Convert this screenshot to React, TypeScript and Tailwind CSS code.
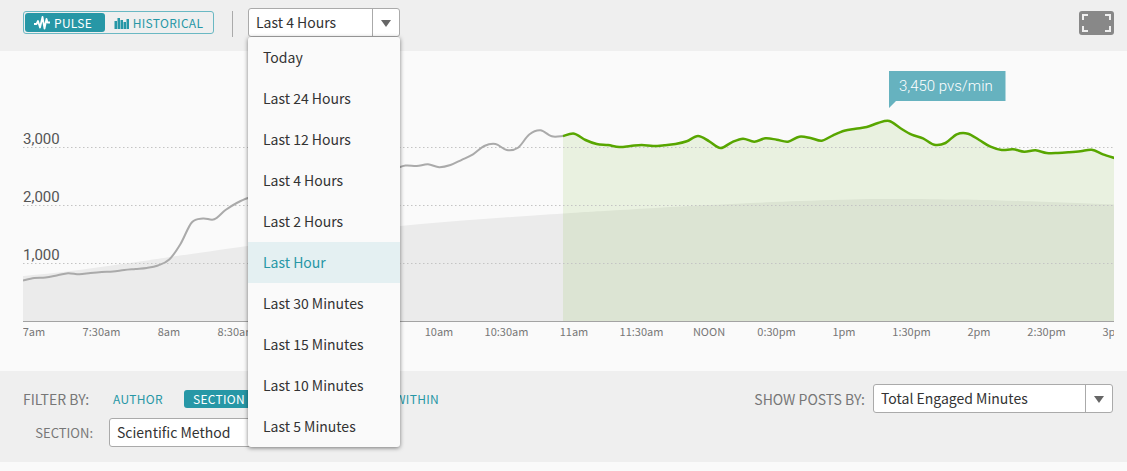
import { useState } from "react";
import type { ReactNode } from "react";

const RANGES = [
  "Today",
  "Last 24 Hours",
  "Last 12 Hours",
  "Last 4 Hours",
  "Last 2 Hours",
  "Last Hour",
  "Last 30 Minutes",
  "Last 15 Minutes",
  "Last 10 Minutes",
  "Last 5 Minutes",
];

const TIMES = [
  "7am", "7:30am", "8am", "8:30am", "9am", "9:30am", "10am", "10:30am", "11am",
  "11:30am", "NOON", "0:30pm", "1pm", "1:30pm", "2pm", "2:30pm", "3pm",
];

// one sample every five minutes, as height above the baseline (58 = 1,000 pvs)
const TRAFFIC = [
  41, 43.5, 44, 46, 48.3, 47.2, 48.5, 49.5, 50, 51.5, 52.5, 53.5, 56, 62, 77.5,
  99, 103, 102.2, 111.5, 118.5, 123.5, 125, 128, 131, 133, 135, 138, 141, 143,
  145, 147, 149, 150, 152.5, 156, 155.5, 157.2, 154.3, 156.5, 161.7, 167.2,
  175.5, 177.5, 171.5, 173.8, 187, 191.2, 185.2, 185.5, 187.8, 181.5, 177.5,
  176.5, 174.5, 175.5, 176.5, 175.5, 176.2, 177.5, 180.2, 185.5, 180.2, 173.5,
  179.2, 182.8, 179.8, 183.2, 181.8, 179.8, 184.8, 183.5, 180.8, 186.2, 190.8,
  192.8, 194.5, 198.5, 200.5, 193.2, 186.8, 183.2, 176.8, 178.5, 187.2, 187.8,
  181.5, 174.8, 171.5, 172.2, 169.8, 171.2, 168.5, 168.5, 169.2, 170.2, 171.8,
  167.2, 163.5,
];

// typical traffic for this day: [x, height above the baseline]
const TYPICAL = [
  [0, 45], [44, 49.5], [110, 58.5], [147, 64], [224, 75], [300, 86], [377, 95],
  [460, 102], [540, 107.5], [597, 111], [686, 116], [777, 120], [857, 122],
  [937, 121.5], [997, 120], [1091, 116.5],
];

const BASE = 270;
const STEP = 11.25;
const LIVE_FROM = 48;

type Point = [number, number];

function smooth(points: Point[]) {
  let d = `M${points[0][0]},${points[0][1]}`;
  for (let i = 0; i < points.length - 1; i++) {
    const p0 = points[i - 1] ?? points[i];
    const p1 = points[i];
    const p2 = points[i + 1];
    const p3 = points[i + 2] ?? p2;
    const c1 = [p1[0] + (p2[0] - p0[0]) / 6, p1[1] + (p2[1] - p0[1]) / 6];
    const c2 = [p2[0] - (p3[0] - p1[0]) / 6, p2[1] - (p3[1] - p1[1]) / 6];
    d += `C${c1[0]},${c1[1]} ${c2[0]},${c2[1]} ${p2[0]},${p2[1]}`;
  }
  return d;
}

const line = TRAFFIC.map((h, i): Point => [i * STEP, BASE + 0.5 - h]);
const past = smooth(line.slice(0, LIVE_FROM + 1));
const live = smooth(line.slice(LIVE_FROM));
const typical = smooth(TYPICAL.map(([x, h]): Point => [x, BASE - h]));

function TrafficChart() {
  const liveX = LIVE_FROM * STEP;

  return (
    <svg viewBox="0 0 1091 320" className="block w-full" role="img" aria-label="Page views per minute">
      <path d={`${typical}V${BASE}H0Z`} fill="#000" fillOpacity="0.06" />
      <path d={`${live}V${BASE}H${liveX}Z`} fill="#58a600" fillOpacity="0.1" />

      {[1, 2, 3].map((n) => (
        <g key={n}>
          <line
            x1="0"
            x2="1091"
            y1={BASE + 0.5 - n * 58}
            y2={BASE + 0.5 - n * 58}
            stroke="#c4c4c4"
            strokeDasharray="1.5 2.5"
          />
          <text x="0" y={BASE - 3 - n * 58} className="fill-[#555] font-['Roboto',sans-serif] text-[15px]">
            {n},000
          </text>
        </g>
      ))}

      <path d={past} fill="none" stroke="#aaa" strokeWidth="2" />
      <path d={live} fill="none" stroke="#58a600" strokeWidth="2.5" />
      <line x1="0" x2="1091" y1={BASE + 0.5} y2={BASE + 0.5} stroke="#a3a3a3" />

      {TIMES.map((time, i) => (
        <text key={time} x={11 + i * 67.5} y="285" textAnchor="middle" className="fill-[#777] text-[11px]">
          {time}
        </text>
      ))}

      <path d="M866 20H982.500V50H873L866 57Z" fill="#66b2bf" />
      <text x="876" y="40" className="fill-white font-['Roboto',sans-serif] text-[15px] font-light">
        3,450 pvs/min
      </text>
    </svg>
  );
}

function PulseIcon() {
  return (
    <svg width="16" height="14" viewBox="0 0 16 14" fill="none" stroke="currentColor" strokeWidth="1.8" strokeLinejoin="round" aria-hidden="true">
      <path d="M0 8H2.500L4 5L6 11.500L8.500 1L10.500 12.500L12.500 3L13.500 6.500H16" />
    </svg>
  );
}

function BarsIcon() {
  return (
    <svg width="15" height="12" viewBox="0 0 15 12" fill="currentColor" aria-hidden="true">
      <path opacity="0.5" d="M0 4h1v8H0zM3 1h1v11H3zM6 3h1v9H6zM9 5h1v7H9zM12 2h1v10h-1z" />
      <path d="M1 4h2v8H1zM4 1h2v11H4zM7 3h2v9H7zM10 5h2v7h-2zM13 2h2v10h-2z" />
    </svg>
  );
}

function Caret() {
  return (
    <span className="flex w-[27px] items-center justify-center self-stretch border-l border-[#aaa] pt-px">
      <svg width="10" height="7" viewBox="0 0 10 7" fill="#666" aria-hidden="true">
        <path d="M0 0H10L5 7Z" />
      </svg>
    </span>
  );
}

function SelectBox({ id, className, children }: { id: string; className: string; children: ReactNode }) {
  return (
    <div className={`relative h-[29px] rounded-[3px] border border-[#aaa] bg-white ${className}`}>
      <select id={id} className="h-full w-full appearance-none bg-transparent pb-0.5 pl-[7px] text-sm leading-5 text-[#333]">
        {children}
      </select>
      <span className="pointer-events-none absolute inset-y-0 right-0 flex">
        <Caret />
      </span>
    </div>
  );
}

function RangePicker() {
  const [open, setOpen] = useState(true);
  const [range, setRange] = useState("Last 4 Hours");

  return (
    <div className="relative w-[152px]">
      <button
        type="button"
        aria-haspopup="listbox"
        aria-expanded={open}
        onClick={() => setOpen(!open)}
        className="flex h-[29px] w-full items-center justify-between rounded-[3px] border border-[#aaa] bg-white pl-[7px] text-sm leading-5 text-[#333]"
      >
        <span className="pb-0.5">{range}</span>
        <Caret />
      </button>
      {open && (
        <div
          role="listbox"
          aria-label="Time range"
          className="absolute top-full left-0 z-10 w-full overflow-hidden rounded-[3px] bg-[#fafafa] shadow-[0_1px_4px_rgba(0,0,0,0.5)]"
        >
          {RANGES.map((item) => (
            <button
              key={item}
              type="button"
              role="option"
              aria-selected={item === range}
              onClick={() => {
                setRange(item);
                setOpen(false);
              }}
              className={`block h-[41px] w-full px-[15px] pb-0.5 text-left text-sm leading-5 ${
                item === "Last Hour" ? "bg-[#e4f0f2] text-[#2797a6]" : "text-[#333]"
              }`}
            >
              {item}
            </button>
          ))}
        </div>
      )}
    </div>
  );
}

export default function App() {
  return (
    <div className="min-h-screen bg-[#fafafa] font-['Noto_Sans_CJK_SC',sans-serif]">
      <header className="flex h-[51px] items-start justify-between bg-[#efefef] pt-2 pr-[13px] pl-[23px]">
        <div className="flex">
          <div className="mt-[3px] flex h-[23px] w-[191px] rounded-[3px] border border-[#6ab8c3] p-px text-xs leading-4 tracking-wide">
            <button type="button" className="flex w-20 items-center gap-1 rounded-[3px] bg-[#2797a6] pl-[9px] text-white">
              <PulseIcon />
              PULSE
            </button>
            <button type="button" className="flex flex-1 items-center justify-center gap-1 text-[#2797a6]">
              <BarsIcon />
              HISTORICAL
            </button>
          </div>
          <div className="mt-[3px] mr-[15px] ml-[18px] h-[26px] w-px bg-[#aaa]" />
          <RangePicker />
        </div>
        <button type="button" aria-label="Full screen" className="mt-[3px] h-6 w-[35px] rounded-[3px] bg-[#888]">
          <svg width="35" height="24" viewBox="0 0 35 24" fill="none" stroke="#efefef" strokeWidth="2" aria-hidden="true">
            <path d="M4 9V4H9M26 4H31V9M31 15V20H26M9 20H4V15" />
          </svg>
        </button>
      </header>

      <main className="pr-[13px] pl-[23px]">
        <TrafficChart />
      </main>

      <section className="flex items-start justify-between bg-[#efefef] pt-[13px] pr-[14px] pb-[15px] pl-[23px]">
        <div>
          <div className="flex h-[30px] items-center text-xs leading-4 tracking-wide text-[#2797a6]">
            <span className="w-20 text-sm leading-5 tracking-normal text-[#777]">FILTER BY:</span>
            <button type="button" className="px-[10px]">AUTHOR</button>
            <button type="button" className="ml-[11px] h-[18px] rounded-[3px] bg-[#2797a6] px-[9px] text-white">SECTION</button>
            <button type="button" className="ml-[141px]">WITHIN</button>
          </div>
          <div className="mt-1 flex items-center">
            <label htmlFor="section" className="w-[86px] pr-4 text-right text-[13px] leading-5 text-[#777]">SECTION:</label>
            <SelectBox id="section" className="w-[240px]">
              <option>Scientific Method</option>
            </SelectBox>
          </div>
        </div>
        <div className="flex items-center gap-2">
          <label htmlFor="sort" className="text-sm leading-5 text-[#777]">SHOW POSTS BY:</label>
          <SelectBox id="sort" className="w-[240px]">
            <option>Total Engaged Minutes</option>
          </SelectBox>
        </div>
      </section>
    </div>
  );
}
